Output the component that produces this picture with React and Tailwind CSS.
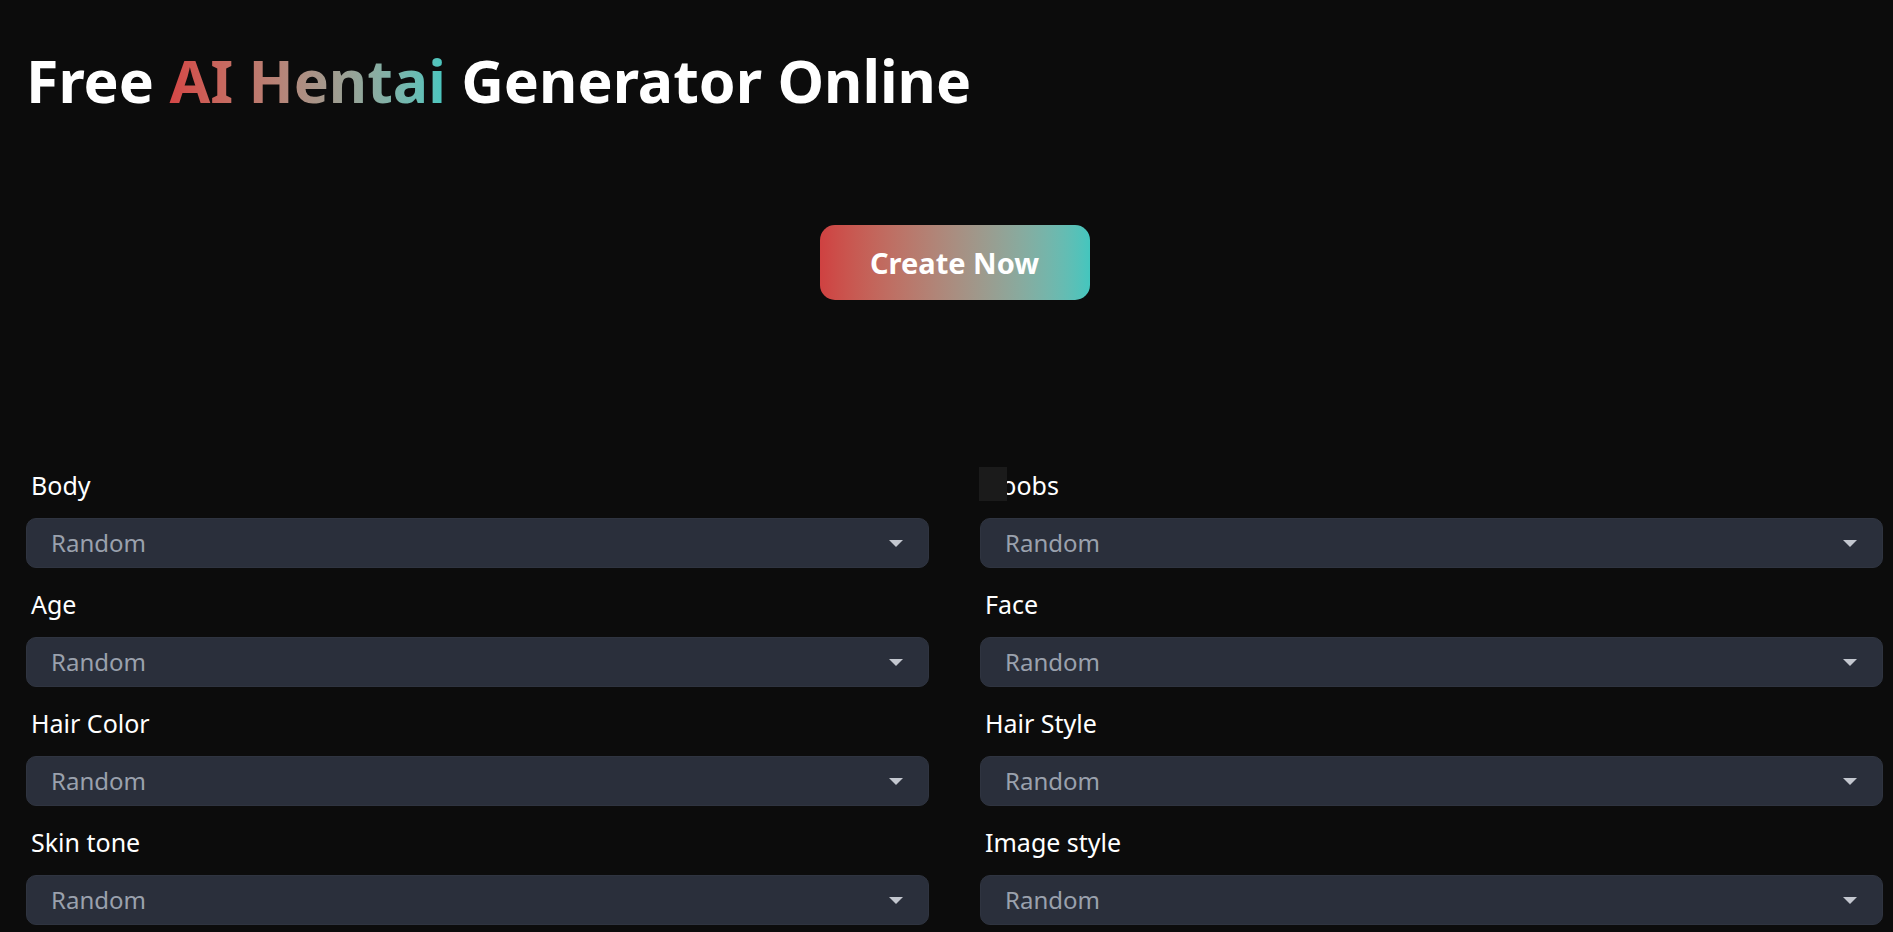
import React from 'react'

const fields = [
    { id: 'body', label: 'Body' },
    { id: 'boobs', label: 'Boobs', masked: true },
    { id: 'age', label: 'Age' },
    { id: 'face', label: 'Face' },
    { id: 'hair-color', label: 'Hair Color' },
    { id: 'hair-style', label: 'Hair Style' },
    { id: 'skin', label: 'Skin tone' },
    { id: 'style', label: 'Image style' },
]

const Field = ({ field }) => {
    return (
        <div className="flex flex-col">
            <label className="pl-[5px] text-[25px] leading-[36px] text-white">
                {field.masked ? (
                    <>
                        <span className="relative">
                            B
                            <span className="absolute -left-[6px] -top-[1px] h-[34px] w-[28px] bg-[#1b1b1b]" />
                        </span>
                        oobs
                    </>
                ) : (
                    field.label
                )}
            </label>
            <div className="mt-[15px] mb-[18px] flex h-[50px] items-center justify-between rounded-[10px] border border-[#2f3440] bg-[#2a2f3b] pl-[24px] pr-[25px]">
                <span className="text-[24px] text-[#9aa1ad]">Random</span>
                <svg width="14" height="7" viewBox="0 0 14 7">
                    <path d="M0 0 L14 0 L7 7 Z" fill="#c3c7cf" />
                </svg>
            </div>
        </div>
    )
}

const App = () => {
    return (
        <div
            className="min-h-screen bg-[#0c0c0c] pl-[26px] pr-[10px] pt-[38px]"
            style={{ fontFamily: '"Noto Sans", "Open Sans", sans-serif' }}
        >
            <h1 className="text-[59px] font-bold leading-[84px] text-white">
                Free{' '}
                <span className="bg-gradient-to-r from-[#d44646] to-[#45c7c0] bg-clip-text text-transparent">
                    AI Hentai
                </span>{' '}
                Generator Online
            </h1>
            <div className="mt-[103px] flex justify-center">
                <button className="h-[75px] w-[270px] rounded-[15px] bg-gradient-to-r from-[#cf4141] to-[#43c6be] text-[29px] font-bold text-white">
                    Create Now
                </button>
            </div>
            <div className="mt-[167px] grid grid-cols-2 gap-x-[51px]">
                {fields.map(f => (
                    <Field key={f.id} field={f} />
                ))}
            </div>
        </div>
    )
}

export default App
